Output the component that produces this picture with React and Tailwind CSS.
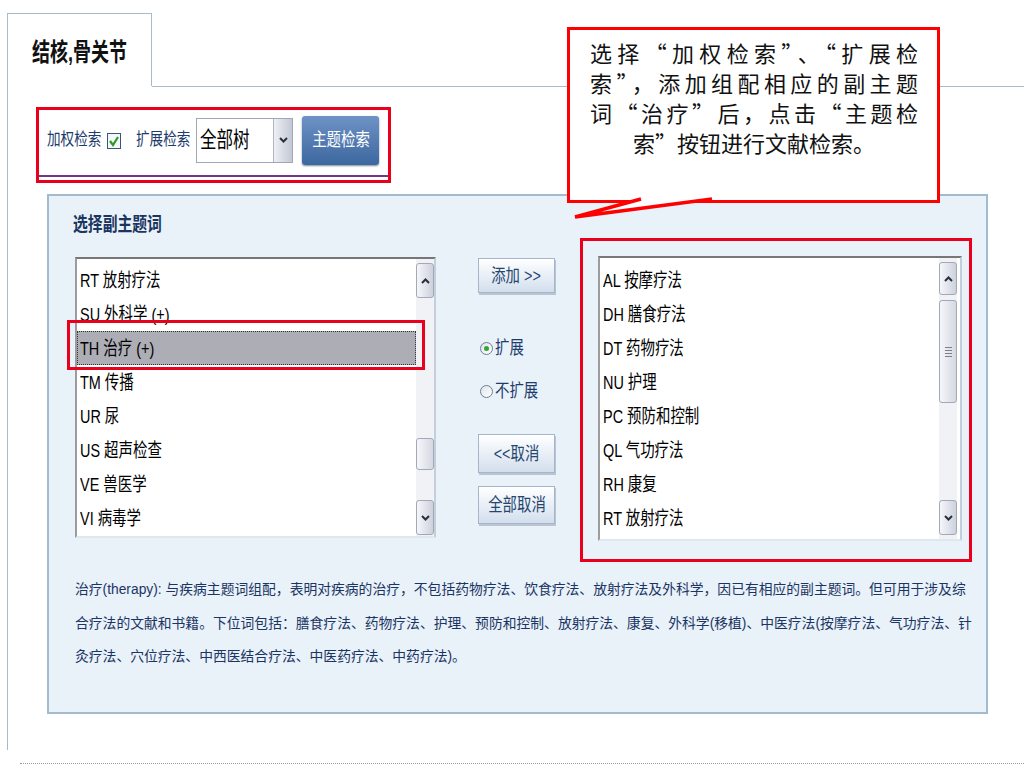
const leftItems = ["RT 放射疗法", "SU 外科学 (+)", "TH 治疗 (+)", "TM 传播", "UR 尿", "US 超声检查", "VE 兽医学", "VI 病毒学"];
const rightItems = ["AL 按摩疗法", "DH 膳食疗法", "DT 药物疗法", "NU 护理", "PC 预防和控制", "QL 气功疗法", "RH 康复", "RT 放射疗法"];

function Chevron({ up }) {
  return (
    <svg width="9" height="6" viewBox="0 0 9 6">
      <path d={up ? "M1 5 L4.5 1.5 L8 5" : "M1 1 L4.5 4.5 L8 1"} fill="none" stroke="#2b2f3a" strokeWidth="2" />
    </svg>
  );
}

function ScrollBtn({ up, className }) {
  return (
    <div className={"flex items-center justify-center rounded-[3px] border border-[#a3a8b6] bg-linear-to-r from-[#f6f7fb] to-[#cdd1dc] " + className}>
      <Chevron up={up} />
    </div>
  );
}

function Item({ children, selected }) {
  return (
    <div
      className={
        selected
          ? "flex h-[34px] items-center border border-dotted border-[#333] bg-[#adadb5] pl-[2px]"
          : "flex h-[34px] items-center pl-[3px]"
      }
    >
      <span className="inline-block origin-left scale-x-[0.76] whitespace-nowrap text-[19px] leading-none text-black">
        {children}
      </span>
    </div>
  );
}

function Radio({ checked, label }) {
  return (
    <div className="flex h-[20px] items-center pl-[2px]">
      <span className="flex h-[13px] w-[13px] items-center justify-center rounded-full border border-[#6f7f94] bg-linear-to-br from-[#dfe4eb] to-white">
        {checked && <span className="h-[5px] w-[5px] rounded-full bg-[#2fa82f]" />}
      </span>
      <span className="ml-[2px] inline-block origin-left scale-x-[0.8] whitespace-nowrap text-[18px] leading-none text-[#1d3b6b]">
        {label}
      </span>
    </div>
  );
}

function SideBtn({ children, className }) {
  return (
    <div
      className={
        "flex w-[77px] items-center justify-center border border-[#a6b6c8] bg-linear-to-b from-white to-[#d3dfed] shadow-[1px_2px_0_#b9c5d2] " +
        className
      }
    >
      <span className="inline-block scale-x-[0.8] whitespace-nowrap text-[18px] leading-none text-[#25466f]">{children}</span>
    </div>
  );
}

export default function App() {
  return (
    <div className="relative h-[768px] w-[1024px] overflow-hidden bg-white font-['Liberation_Sans','Noto_Sans_CJK_SC',sans-serif]">
      {/* FRAME */}
      <div className="ml-[7px] mt-[13px] h-[737px] border-l border-[#a8bbc9]">
        {/* TAB HEADER */}
        <div className="flex h-[74px]">
          <div className="h-[73px] w-[144px] border-r border-t border-[#a8bbc9] pl-[24px] pt-[24px]">
            <span className="inline-block origin-left scale-x-[0.72] whitespace-nowrap text-[25px] font-bold leading-[28px] text-[#111]">
              结核,骨关节
            </span>
          </div>
          <div className="flex-1 border-b border-[#a8bbc9]" />
        </div>

        {/* TOOLBAR (annotated) */}
        <div className="ml-[28px] mt-[20px] h-[76px] w-[355px] border-[3px] border-[#e8001c] shadow-[inset_0_-3px_0_#fff,inset_0_-5px_0_#6d3a8a]">
          <div className="flex h-full items-center pb-[10px] pl-[8px]">
            <div className="w-[54px]">
              <span className="inline-block origin-left scale-x-[0.8] whitespace-nowrap text-[17px] leading-none text-[#1d3b6b]">加权检索</span>
            </div>
            <svg className="ml-[6px]" width="14" height="20" viewBox="0 0 14 20">
              <rect x="0.5" y="3.5" width="13" height="15" fill="#f4f6f8" stroke="#3b5578" />
              <path d="M3 11 L6 15 L11 7" fill="none" stroke="#2a9a2a" strokeWidth="2.2" />
            </svg>
            <div className="ml-[15px] w-[54px]">
              <span className="inline-block origin-left scale-x-[0.8] whitespace-nowrap text-[17px] leading-none text-[#1d3b6b]">扩展检索</span>
            </div>
            <div className="ml-[6px] flex h-[45px] w-[97px] border border-[#a0a8b8] bg-white">
              <div className="flex flex-1 items-center pl-[3px]">
                <span className="inline-block origin-left scale-x-[0.75] whitespace-nowrap text-[22px] leading-none text-black">全部树</span>
              </div>
              <div className="flex w-[19px] items-center justify-center border-l border-[#b0b6c4] bg-linear-to-r from-[#eef0f5] to-[#c3c8d4]">
                <Chevron />
              </div>
            </div>
            <div className="ml-[9px] flex h-[49px] w-[77px] items-center justify-center rounded-[3px] bg-linear-to-b from-[#6e93c6] to-[#3c679f] shadow-[0_1px_2px_#7a8aa0]">
              <span className="inline-block scale-x-[0.8] whitespace-nowrap text-[18px] leading-none text-white">主题检索</span>
            </div>
          </div>
        </div>

        {/* PANEL */}
        <div className="ml-[39px] mt-[11px] h-[520px] w-[941px] border-2 border-[#a3bbcf] bg-[#e9f1f9] pl-[24px] pt-[17px]">
          <div className="h-[24px]">
            <span className="inline-block origin-left scale-x-[0.78] whitespace-nowrap text-[19px] font-bold leading-[24px] text-[#1a365f]">
              选择副主题词
            </span>
          </div>

          <div className="mt-[1px] flex items-start">
            {/* LEFT LIST */}
            <div className="ml-[2px] mt-[19px] flex h-[281px] w-[361px] border-2 border-b-[#dfe7ef] border-l-[#9c9c9c] border-r-[#c3cfdb] border-t-[#777] bg-white">
              <div className="flex-1 pt-[4px]">
                {leftItems.map((t, i) => (
                  <Item key={t} selected={i === 2}>
                    {t}
                  </Item>
                ))}
              </div>
              <div className="flex w-[18px] flex-col bg-[#f1f2f6] pt-[4px]">
                <ScrollBtn up className="h-[35px]" />
                <div className="mt-[140px] h-[32px] rounded-[3px] border border-[#a3a8b6] bg-linear-to-r from-[#f6f7fb] to-[#d5d8e2]" />
                <ScrollBtn className="mt-[30px] h-[35px]" />
              </div>
            </div>

            {/* MIDDLE BUTTONS */}
            <div className="ml-[42px] mt-[20px] flex flex-col">
              <SideBtn className="h-[35px]">添加 &gt;&gt;</SideBtn>
              <div className="mt-[45px]">
                <Radio checked label="扩展" />
              </div>
              <div className="mt-[23px]">
                <Radio label="不扩展" />
              </div>
              <SideBtn className="mt-[33px] h-[39px]">&lt;&lt;取消</SideBtn>
              <SideBtn className="mt-[13px] h-[38px]">全部取消</SideBtn>
            </div>

            {/* RIGHT LIST (annotated) */}
            <div className="ml-[25px] h-[324px] w-[392px] border-[3px] border-[#e8001c] p-[15px]">
              <div className="flex h-[285px] w-[364px] border-2 border-b-[#dfe7ef] border-l-[#9c9c9c] border-r-[#c3cfdb] border-t-[#777] bg-white">
                <div className="flex-1 pt-[5px]">
                  {rightItems.map((t) => (
                    <Item key={t}>{t}</Item>
                  ))}
                </div>
                <div className="mr-[3px] flex w-[18px] flex-col bg-[#f1f2f6] pt-[4px]">
                  <ScrollBtn up className="h-[33px]" />
                  <div className="mt-[5px] flex h-[103px] flex-col items-center justify-center gap-[2px] rounded-[3px] border border-[#a3a8b6] bg-linear-to-r from-[#f6f7fb] to-[#d5d8e2]">
                    <div className="h-px w-[7px] bg-[#7b8090]" />
                    <div className="h-px w-[7px] bg-[#7b8090]" />
                    <div className="h-px w-[7px] bg-[#7b8090]" />
                    <div className="h-px w-[7px] bg-[#7b8090]" />
                  </div>
                  <ScrollBtn className="mt-[97px] h-[35px]" />
                </div>
              </div>
            </div>
          </div>

          {/* DESCRIPTION */}
          <div className="mt-[11px] pl-[2px] text-[13.8px] leading-[33.5px] text-[#1a3563]">
            <div className="whitespace-nowrap">
              治疗(therapy): 与疾病主题词组配，表明对疾病的治疗，不包括药物疗法、饮食疗法、放射疗法及外科学，因已有相应的副主题词。但可用于涉及综
            </div>
            <div className="whitespace-nowrap">
              合疗法的文献和书籍。下位词包括：膳食疗法、药物疗法、护理、预防和控制、放射疗法、康复、外科学(移植)、中医疗法(按摩疗法、气功疗法、针
            </div>
            <div className="whitespace-nowrap">灸疗法、穴位疗法、中西医结合疗法、中医药疗法、中药疗法)。</div>
          </div>
        </div>
      </div>

      {/* BOTTOM DOTTED RULE */}
      <div className="ml-[20px] mt-[13px] border-t border-dotted border-[#9a9a9a]" />

      {/* ANNOTATION: selected row */}
      <div className="absolute left-[67px] top-[320px] h-[50px] w-[358px] border-[3px] border-[#e8001c]" />

      {/* ANNOTATION: callout */}
      <div className="absolute left-[567px] top-[27px] h-[176px] w-[373px] border-[3px] border-[#f00] bg-white pl-[20px] pr-[19px] pt-[7px] font-['Noto_Sans_CJK_SC',sans-serif] text-[22px] leading-[30px] text-[#111]">
        <div className="h-[30px] [text-align-last:justify]">选择“加权检索”、“扩展检</div>
        <div className="h-[30px] [text-align-last:justify]">索”，添加组配相应的副主题</div>
        <div className="h-[30px] [text-align-last:justify]">词“治疗”后，点击“主题检</div>
        <div className="h-[30px] text-center">索”按钮进行文献检索。</div>
      </div>
      <svg className="absolute left-[560px] top-[190px]" width="170" height="32" viewBox="560 190 170 32">
        <polyline points="641,199 575,217 712,199" fill="#fff" stroke="#f00" strokeWidth="3.5" strokeLinejoin="miter" />
      </svg>
    </div>
  );
}
